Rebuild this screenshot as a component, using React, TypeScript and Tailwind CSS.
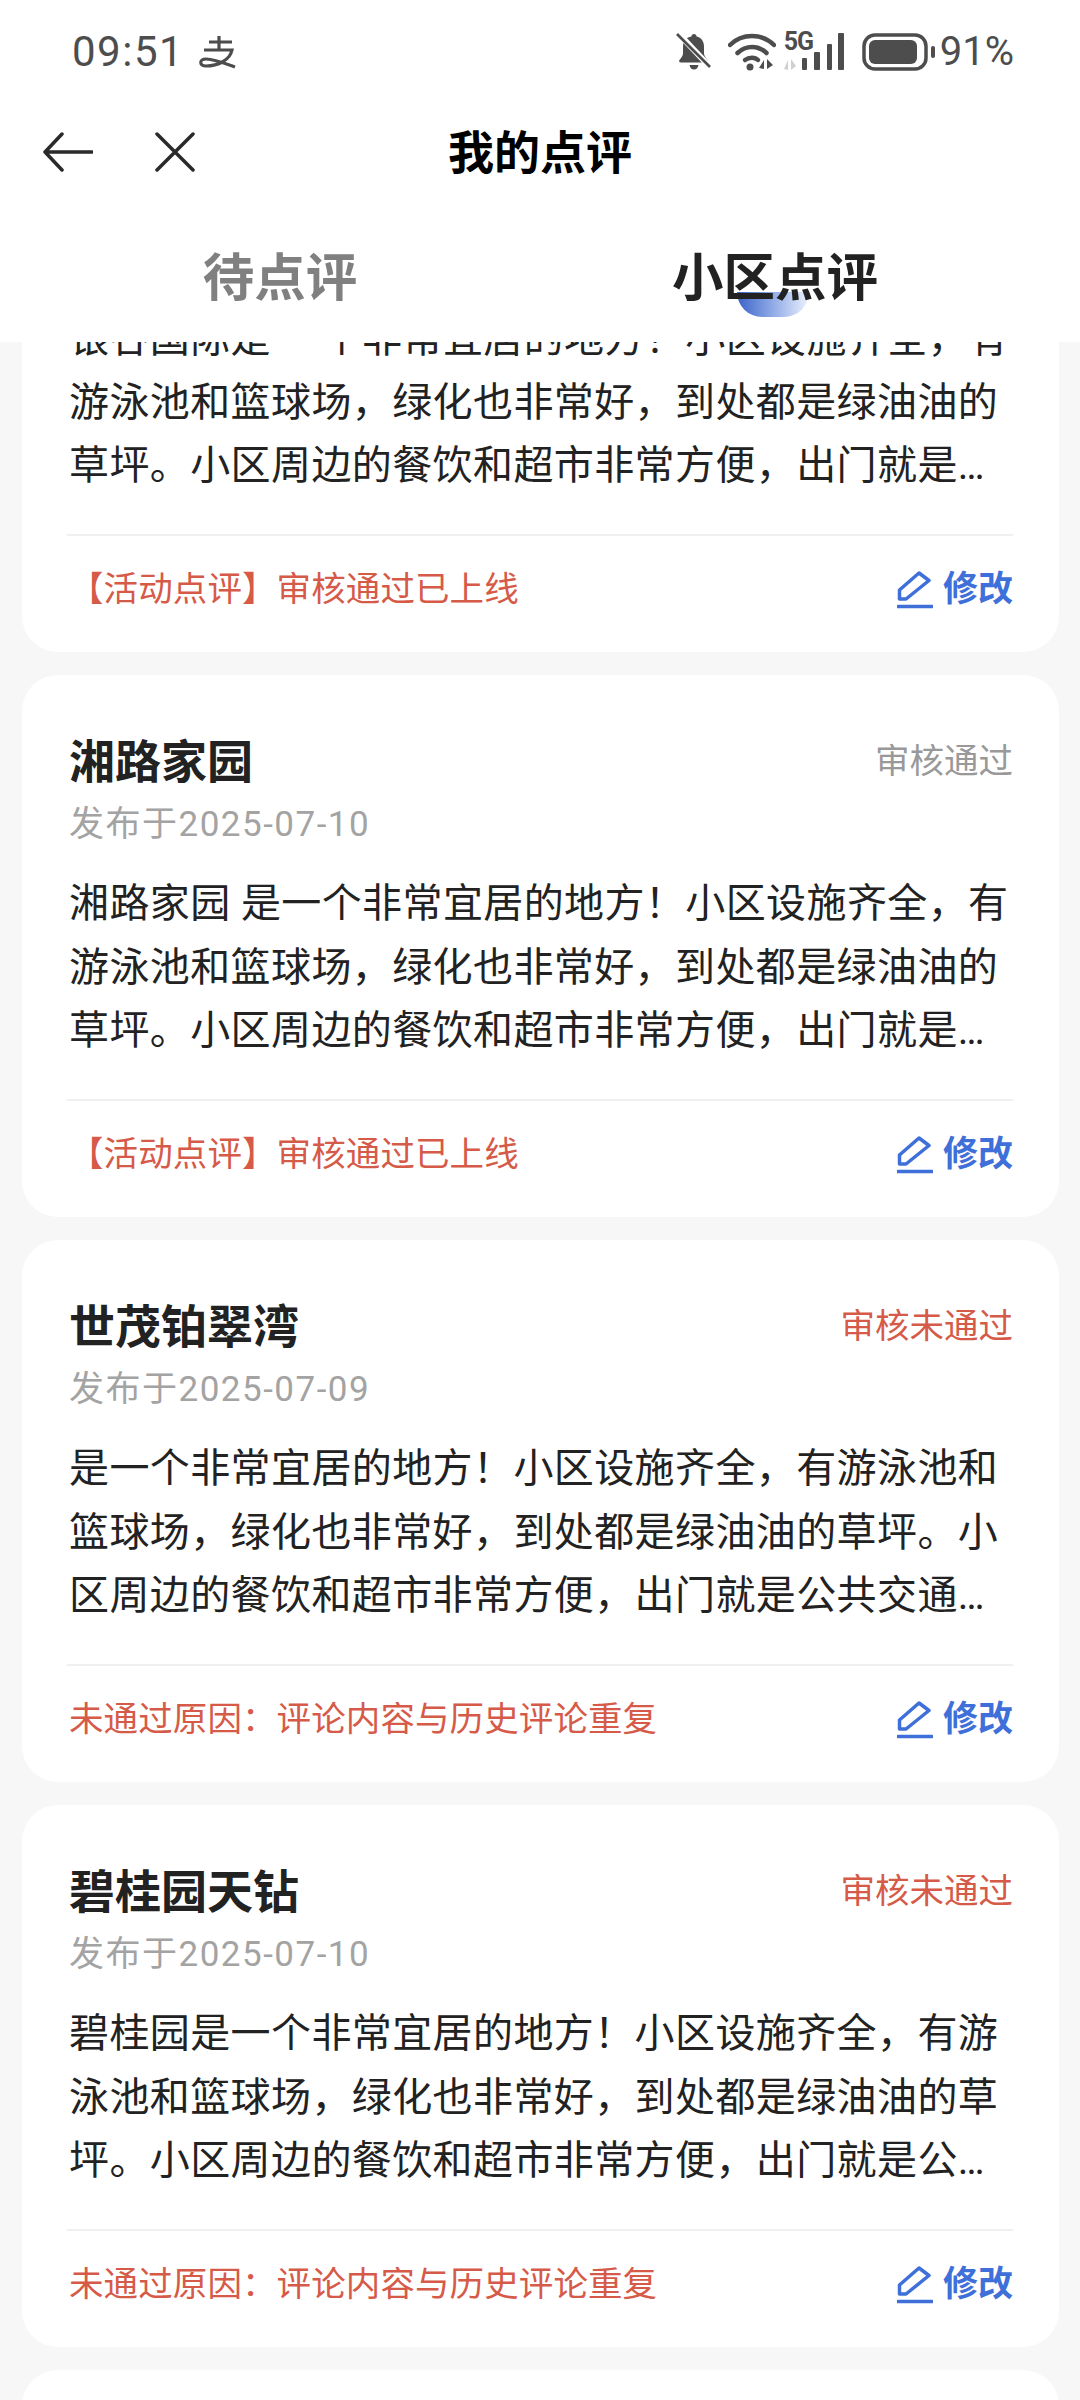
const font = { fontFamily: 'Roboto, "Noto Sans CJK SC", sans-serif' };

type Review = {
  name: string;
  date: string;
  status: string;
  rejected: boolean;
  body: string;
  note: string;
};

const rest =
  "小区设施齐全，有游泳池和篮球场，绿化也非常好，到处都是绿油油的草坪。小区周边的餐饮和超市非常方便，出门就是公共交通站点，生活十分便利，值得推荐给大家。";

const reviews: Review[] = [
  {
    name: "银谷国际",
    date: "发布于2025-07-10",
    status: "审核通过",
    rejected: false,
    body: "银谷国际是 一个非常宜居的地方！" + rest,
    note: "【活动点评】审核通过已上线",
  },
  {
    name: "湘路家园",
    date: "发布于2025-07-10",
    status: "审核通过",
    rejected: false,
    body: "湘路家园 是一个非常宜居的地方！" + rest,
    note: "【活动点评】审核通过已上线",
  },
  {
    name: "世茂铂翠湾",
    date: "发布于2025-07-09",
    status: "审核未通过",
    rejected: true,
    body: "是一个非常宜居的地方！" + rest,
    note: "未通过原因：评论内容与历史评论重复",
  },
  {
    name: "碧桂园天钻",
    date: "发布于2025-07-10",
    status: "审核未通过",
    rejected: true,
    body: "碧桂园是一个非常宜居的地方！" + rest,
    note: "未通过原因：评论内容与历史评论重复",
  },
  {
    name: "保利心语",
    date: "发布于2025-07-08",
    status: "审核通过",
    rejected: false,
    body: "保利心语是一个非常宜居的地方！" + rest,
    note: "【活动点评】审核通过已上线",
  },
];

function StatusIcons() {
  return (
    <div className="flex items-center">
      <svg width="36" height="42" viewBox="0 0 36 42" className="mr-[16px]" fill="#4d4d4d">
        <path d="M18 3c1.500 0 2.500 1 2.600 2.400 4.800 1.200 7.400 5 7.400 10v7c0 2 1.600 4 3.400 6.400 1 1.300.4 2.600-1.200 2.600H4.800c-1.600 0-2.200-1.300-1.200-2.600C5.400 26.400 7 24.400 7 22.400v-7c0-5 2.600-8.800 8.400-10C15.500 4 16.500 3 18 3z" />
        <path d="M13.500 34h9c-.5 3-2.300 4.500-4.500 4.500S14 37 13.500 34z" />
        <path d="M1 1 34 36" stroke="#fff" strokeWidth="6" />
        <path d="M1 3 34 36" stroke="#4d4d4d" strokeWidth="2.600" />
      </svg>
      <svg width="48" height="38" viewBox="0 0 48 38" fill="none" className="mr-[8px]">
        <path d="M2 12C14 0 34 0 46 12" stroke="#4d4d4d" strokeWidth="4.500" strokeLinecap="round" />
        <path d="M9.500 20C18 12 30 12 38.500 20" stroke="#4d4d4d" strokeWidth="4.500" strokeLinecap="round" />
        <path d="M17 27c4-3 10-3 13 0" stroke="#4d4d4d" strokeWidth="4.500" strokeLinecap="round" />
        <circle cx="22" cy="34" r="3.500" fill="#4d4d4d" />
        <path d="M36 27v9l-5-1zM39 26v10l6-4z" fill="#4d4d4d" />
      </svg>
      <div className="relative w-[62px] h-[38px] mr-[16px]">
        <span className="absolute left-0 -top-[5px] text-[25px] leading-[28px] font-bold text-[#4d4d4d] tracking-[-1px]">5G</span>
        <svg width="62" height="38" viewBox="0 0 62 38" className="absolute inset-0">
          <path d="M4 27v10l-4-1zM7 26v11l5-4z" fill="#d0d0d0" />
          <rect x="18" y="25" width="5" height="12" rx="1" fill="#4d4d4d" />
          <rect x="30" y="19" width="6" height="18" rx="1" fill="#4d4d4d" />
          <rect x="43" y="11" width="5" height="26" rx="1" fill="#4d4d4d" />
          <rect x="54" y="0" width="6" height="37" rx="1" fill="#4d4d4d" />
        </svg>
      </div>
      <svg width="74" height="38" viewBox="0 0 74 38" className="mr-[4px]">
        <rect x="2" y="2" width="62" height="34" rx="11" fill="none" stroke="#4d4d4d" strokeWidth="3.500" />
        <rect x="7" y="7" width="48" height="24" rx="6" fill="#4d4d4d" />
        <rect x="69" y="13" width="4" height="12" rx="2" fill="#4d4d4d" />
      </svg>
      <span className="text-[40px] leading-[48px] text-[#4d4d4d]">91%</span>
    </div>
  );
}

function Header() {
  return (
    <header className="relative z-10 bg-white h-[342px] shrink-0 flex flex-col">
      <div className="h-[104px] pl-[72px] pr-[66px] flex items-center justify-between">
        <div className="flex items-center gap-[14px]">
          <span className="text-[42px] leading-[48px] tracking-[1.500px] text-[#4d4d4d]">09:51</span>
          <svg width="38" height="34" viewBox="0 0 38 34" fill="none" stroke="#4d4d4d" strokeWidth="3.200">
            <path d="M11 7h23M21 1v14M6 15h28C32 25 20 31 8 31c-7 0-7-7 0-7 8 0 18 4 29 8" />
          </svg>
        </div>
        <StatusIcons />
      </div>
      <nav className="relative h-[96px] flex items-center justify-center">
        <button className="absolute left-[43px] top-[28px]" aria-label="返回">
          <svg width="50" height="40" viewBox="0 0 50 40" fill="none" stroke="#2a2a2a" strokeWidth="3.500" strokeLinecap="round" strokeLinejoin="round">
            <path d="M49 20H2M19 2 2 20l17 18" />
          </svg>
        </button>
        <button className="absolute left-[155px] top-[28px]" aria-label="关闭">
          <svg width="40" height="40" viewBox="0 0 40 40" fill="none" stroke="#2a2a2a" strokeWidth="3.500" strokeLinecap="round">
            <path d="M2 2l36 36M38 2 2 38" />
          </svg>
        </button>
        <h1 className="text-[46px] leading-[60px] pt-[2px] font-bold text-black">我的点评</h1>
      </nav>
      <div className="flex-1 grid grid-cols-2 pt-[41px]">
        <div className="flex justify-center pl-[20px]">
          <span className="text-[51.500px] leading-[76px] font-bold text-[#808080]">待点评</span>
        </div>
        <div className="flex justify-center pr-[70px]">
          <span className="relative text-[51.500px] leading-[76px] font-bold text-[#222222]">
            <span className="absolute left-[65px] top-[51px] w-[72px] h-[25px] rounded-b-full bg-gradient-to-r from-[#3d62c8] to-[#edf2fd]" />
            <span className="relative">小区点评</span>
          </span>
        </div>
      </div>
    </header>
  );
}

function Card({ r }: { r: Review }) {
  return (
    <article className="bg-white rounded-[36px] h-[542px] pl-[47px] pr-[46px] flex flex-col shrink-0">
      <div className="flex items-center justify-between pt-[52px]">
        <h2 className="text-[46px] leading-[64px] mt-[3px] font-bold text-[#222222]">{r.name}</h2>
        <span className={"text-[34.500px] leading-[48px] " + (r.rejected ? "text-[#d65a48]" : "text-[#999999]")}>{r.status}</span>
      </div>
      <p className="text-[35px] leading-[48px] tracking-[1.500px] mt-[7px] text-[#a3a3a3]">{r.date}</p>
      <p className="text-[40px] leading-[63.500px] tracking-[0.4px] text-[#222222] mt-[23px] line-clamp-3 h-[191px]">{r.body}</p>
      <div className="h-[2px] -ml-[2px] bg-[#f0f0f0] mt-[36px]" />
      <div className="flex items-center justify-between h-[108px]">
        <span className="text-[34.500px] tracking-[0.1px] text-[#d65a48]">{r.note}</span>
        <span className="flex items-center gap-[10px]">
          <svg width="36" height="38" viewBox="0 0 36 38" fill="none" stroke="#3f6fd9" strokeWidth="3.500" strokeLinejoin="round">
            <path d="M22 2 32 9.500 9 28H2.500v-9z" />
            <path d="M1 35.500h34" strokeLinecap="round" />
          </svg>
          <span className="text-[35px] leading-[48px] font-bold text-[#3f6fd9]">修改</span>
        </span>
      </div>
    </article>
  );
}

export default function App() {
  return (
    <div className="w-[1080px] h-[2400px] overflow-hidden flex flex-col bg-[#f7f7f7]" style={font}>
      <Header />
      <main className="flex-1 overflow-hidden pl-[22px] pr-[21px]">
        <div className="flex flex-col gap-[23px] -mt-[232px]">
          {reviews.map((r) => (
            <Card key={r.name} r={r} />
          ))}
        </div>
      </main>
    </div>
  );
}
